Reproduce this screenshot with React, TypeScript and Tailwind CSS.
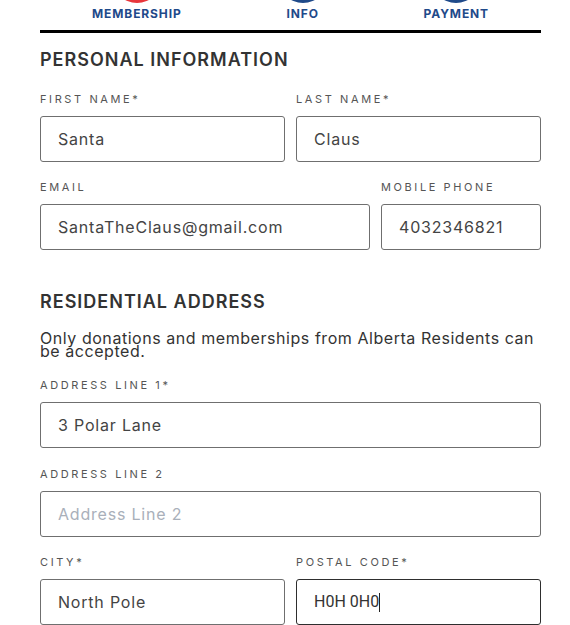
import type { ReactNode } from 'react'

const steps = [
  { label: 'MEMBERSHIP', color: 'bg-[#e8363b]' },
  { label: 'INFO', color: 'bg-[#1f4a8a]' },
  { label: 'PAYMENT', color: 'bg-[#1f4a8a]' },
]

function Label({ children }: { children: ReactNode }) {
  return (
    <label className="block text-[11px] leading-[14px] tracking-[2.6px] text-[#555] mb-[10px]">
      {children}
    </label>
  )
}

function Field({
  label,
  value,
  placeholder,
  className = '',
}: {
  label: string
  value?: string
  placeholder?: string
  className?: string
}) {
  return (
    <div className={className}>
      <Label>{label}</Label>
      <input
        readOnly
        value={value ?? ''}
        placeholder={placeholder}
        className="block w-full h-[46px] rounded-[3px] border border-[#6f6f6f] px-[17px] text-[16px] tracking-[0.8px] text-[#444] placeholder:text-[#a9b0ba] outline-none bg-white"
      />
    </div>
  )
}

export default function App() {
  return (
    <div className="min-h-screen bg-white overflow-hidden font-['Inter','Noto_Sans',sans-serif]">
      <div className="ml-[40px] w-[501px]">
        {/* Stepper */}
        <div className="flex justify-around px-[4px]">
          {steps.map((step) => (
            <div key={step.label} className="flex flex-col items-center">
              <div className={`w-[50px] h-[50px] rounded-full -mt-[47px] ${step.color}`} />
              <span className="mt-[4px] text-[12px] leading-[14px] font-bold tracking-[0.9px] text-[#1f4a8a]">
                {step.label}
              </span>
            </div>
          ))}
        </div>
        <div className="mt-[9px] h-[3px] bg-black" />

        {/* Personal information */}
        <h2 className="mt-[16px] text-[18px] leading-[22px] font-semibold tracking-[1px] text-[#333]">
          PERSONAL INFORMATION
        </h2>
        <div className="mt-[21px] flex gap-[11px]">
          <Field className="flex-1" label="FIRST NAME*" value="Santa" />
          <Field className="flex-1" label="LAST NAME*" value="Claus" />
        </div>
        <div className="mt-[18px] flex gap-[11px]">
          <Field className="flex-1" label="EMAIL" value="SantaTheClaus@gmail.com" />
          <Field className="w-[160px]" label="MOBILE PHONE" value="4032346821" />
        </div>

        {/* Residential address */}
        <h2 className="mt-[41px] text-[18px] leading-[22px] font-semibold tracking-[1px] text-[#333]">
          RESIDENTIAL ADDRESS
        </h2>
        <p className="mt-[19px] text-[16px] leading-[13px] tracking-[0.55px] text-[#333]">
          Only donations and memberships from Alberta Residents can be accepted.
        </p>
        <div className="mt-[20px]">
          <Field label="ADDRESS LINE 1*" value="3 Polar Lane" />
        </div>
        <div className="mt-[19px]">
          <Field label="ADDRESS LINE 2" placeholder="Address Line 2" />
        </div>
        <div className="mt-[18px] flex gap-[11px]">
          <Field className="flex-1" label="CITY*" value="North Pole" />
          <div className="flex-1">
            <Label>POSTAL CODE*</Label>
            <div className="flex items-center h-[46px] rounded-[3px] border border-[#2e2e2e] px-[17px] text-[16px] text-[#333] font-['Roboto',sans-serif]">
              <span>H0H 0H0</span>
              <span className="w-px h-[19px] bg-[#222]" />
            </div>
          </div>
        </div>
      </div>
    </div>
  )
}
